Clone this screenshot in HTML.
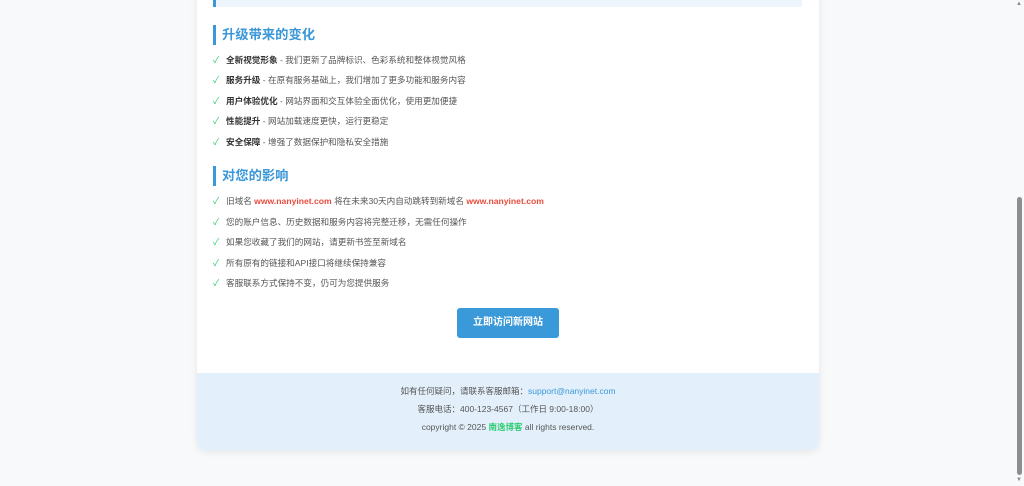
<!DOCTYPE html><html><head><meta charset="utf-8"><style>
body{margin:0;width:1024px;height:486px;background:#f7f9fb;font-family:"Liberation Sans","Noto Sans CJK SC",sans-serif;overflow:hidden;position:relative}
.card{position:absolute;left:197px;top:-20px;width:622px;height:470px;background:#fff;border-radius:0 0 10px 10px;box-shadow:0 2px 8px rgba(0,0,0,.08);overflow:hidden}
.a{position:absolute;white-space:nowrap}
.top{left:213px;top:0;width:589px;height:7px;background:#eef5fc;border-left:3px solid #3a97d8;box-sizing:border-box}
.h{left:213px;height:20px;border-left:3px solid #3a97d8;padding-left:6px;font-size:13.3px;font-weight:bold;color:#3a97d8;line-height:20px}
.i{left:213px;font-size:8.6px;color:#555;line-height:12px}
.i b{color:#333}
.i .c{color:#2ecc71;font-size:9px;margin-right:6px;display:inline-block;width:7px}
.r{color:#e74c3c;font-weight:bold}
.btn{left:457px;top:308px;width:102px;height:30px;background:#3a9ad9;border-radius:3px;color:#fff;font-size:10px;font-weight:bold;text-align:center;line-height:30px}
.foot{left:197px;top:373px;width:622px;height:77px;background:#e3f0fb;border-radius:0 0 10px 10px}
.f{left:197px;width:622px;text-align:center;font-size:8.5px;color:#555;line-height:12px}
.sb{left:1017px;top:197px;width:5px;height:278px;background:#8e8e8e;border-radius:3px}
</style></head><body>
<div class="card"></div>
<div class="a top"></div>
<div class="a h" style="top:25px">升级带来的变化</div>
<div class="a i" style="top:54px"><span class="c">✓</span><b>全新视觉形象</b> - 我们更新了品牌标识、色彩系统和整体视觉风格</div>
<div class="a i" style="top:74px"><span class="c">✓</span><b>服务升级</b> - 在原有服务基础上，我们增加了更多功能和服务内容</div>
<div class="a i" style="top:95px"><span class="c">✓</span><b>用户体验优化</b> - 网站界面和交互体验全面优化，使用更加便捷</div>
<div class="a i" style="top:115px"><span class="c">✓</span><b>性能提升</b> - 网站加载速度更快，运行更稳定</div>
<div class="a i" style="top:136px"><span class="c">✓</span><b>安全保障</b> - 增强了数据保护和隐私安全措施</div>
<div class="a h" style="top:166px">对您的影响</div>
<div class="a i" style="top:195px"><span class="c">✓</span>旧域名 <span class="r">www.nanyinet.com</span> 将在未来30天内自动跳转到新域名 <span class="r">www.nanyinet.com</span></div>
<div class="a i" style="top:216px"><span class="c">✓</span>您的账户信息、历史数据和服务内容将完整迁移，无需任何操作</div>
<div class="a i" style="top:236px"><span class="c">✓</span>如果您收藏了我们的网站，请更新书签至新域名</div>
<div class="a i" style="top:257px"><span class="c">✓</span>所有原有的链接和API接口将继续保持兼容</div>
<div class="a i" style="top:277px"><span class="c">✓</span>客服联系方式保持不变，仍可为您提供服务</div>
<div class="a btn">立即访问新网站</div>
<div class="a foot"></div>
<div class="a f" style="top:385px">如有任何疑问，请联系客服邮箱：<span style="color:#3a97d8">support@nanyinet.com</span></div>
<div class="a f" style="top:403px">客服电话：400-123-4567（工作日 9:00-18:00）</div>
<div class="a f" style="top:421px">copyright © 2025 <span style="color:#2ecc71;font-weight:bold">南逸博客</span> all rights reserved.</div>
<div class="a sb"></div>
<div class="a" style="left:1016px;top:1px;font-size:6px;color:#888">▲</div>
<div class="a" style="left:1016px;top:477px;font-size:6px;color:#888">▼</div>
</body></html>
